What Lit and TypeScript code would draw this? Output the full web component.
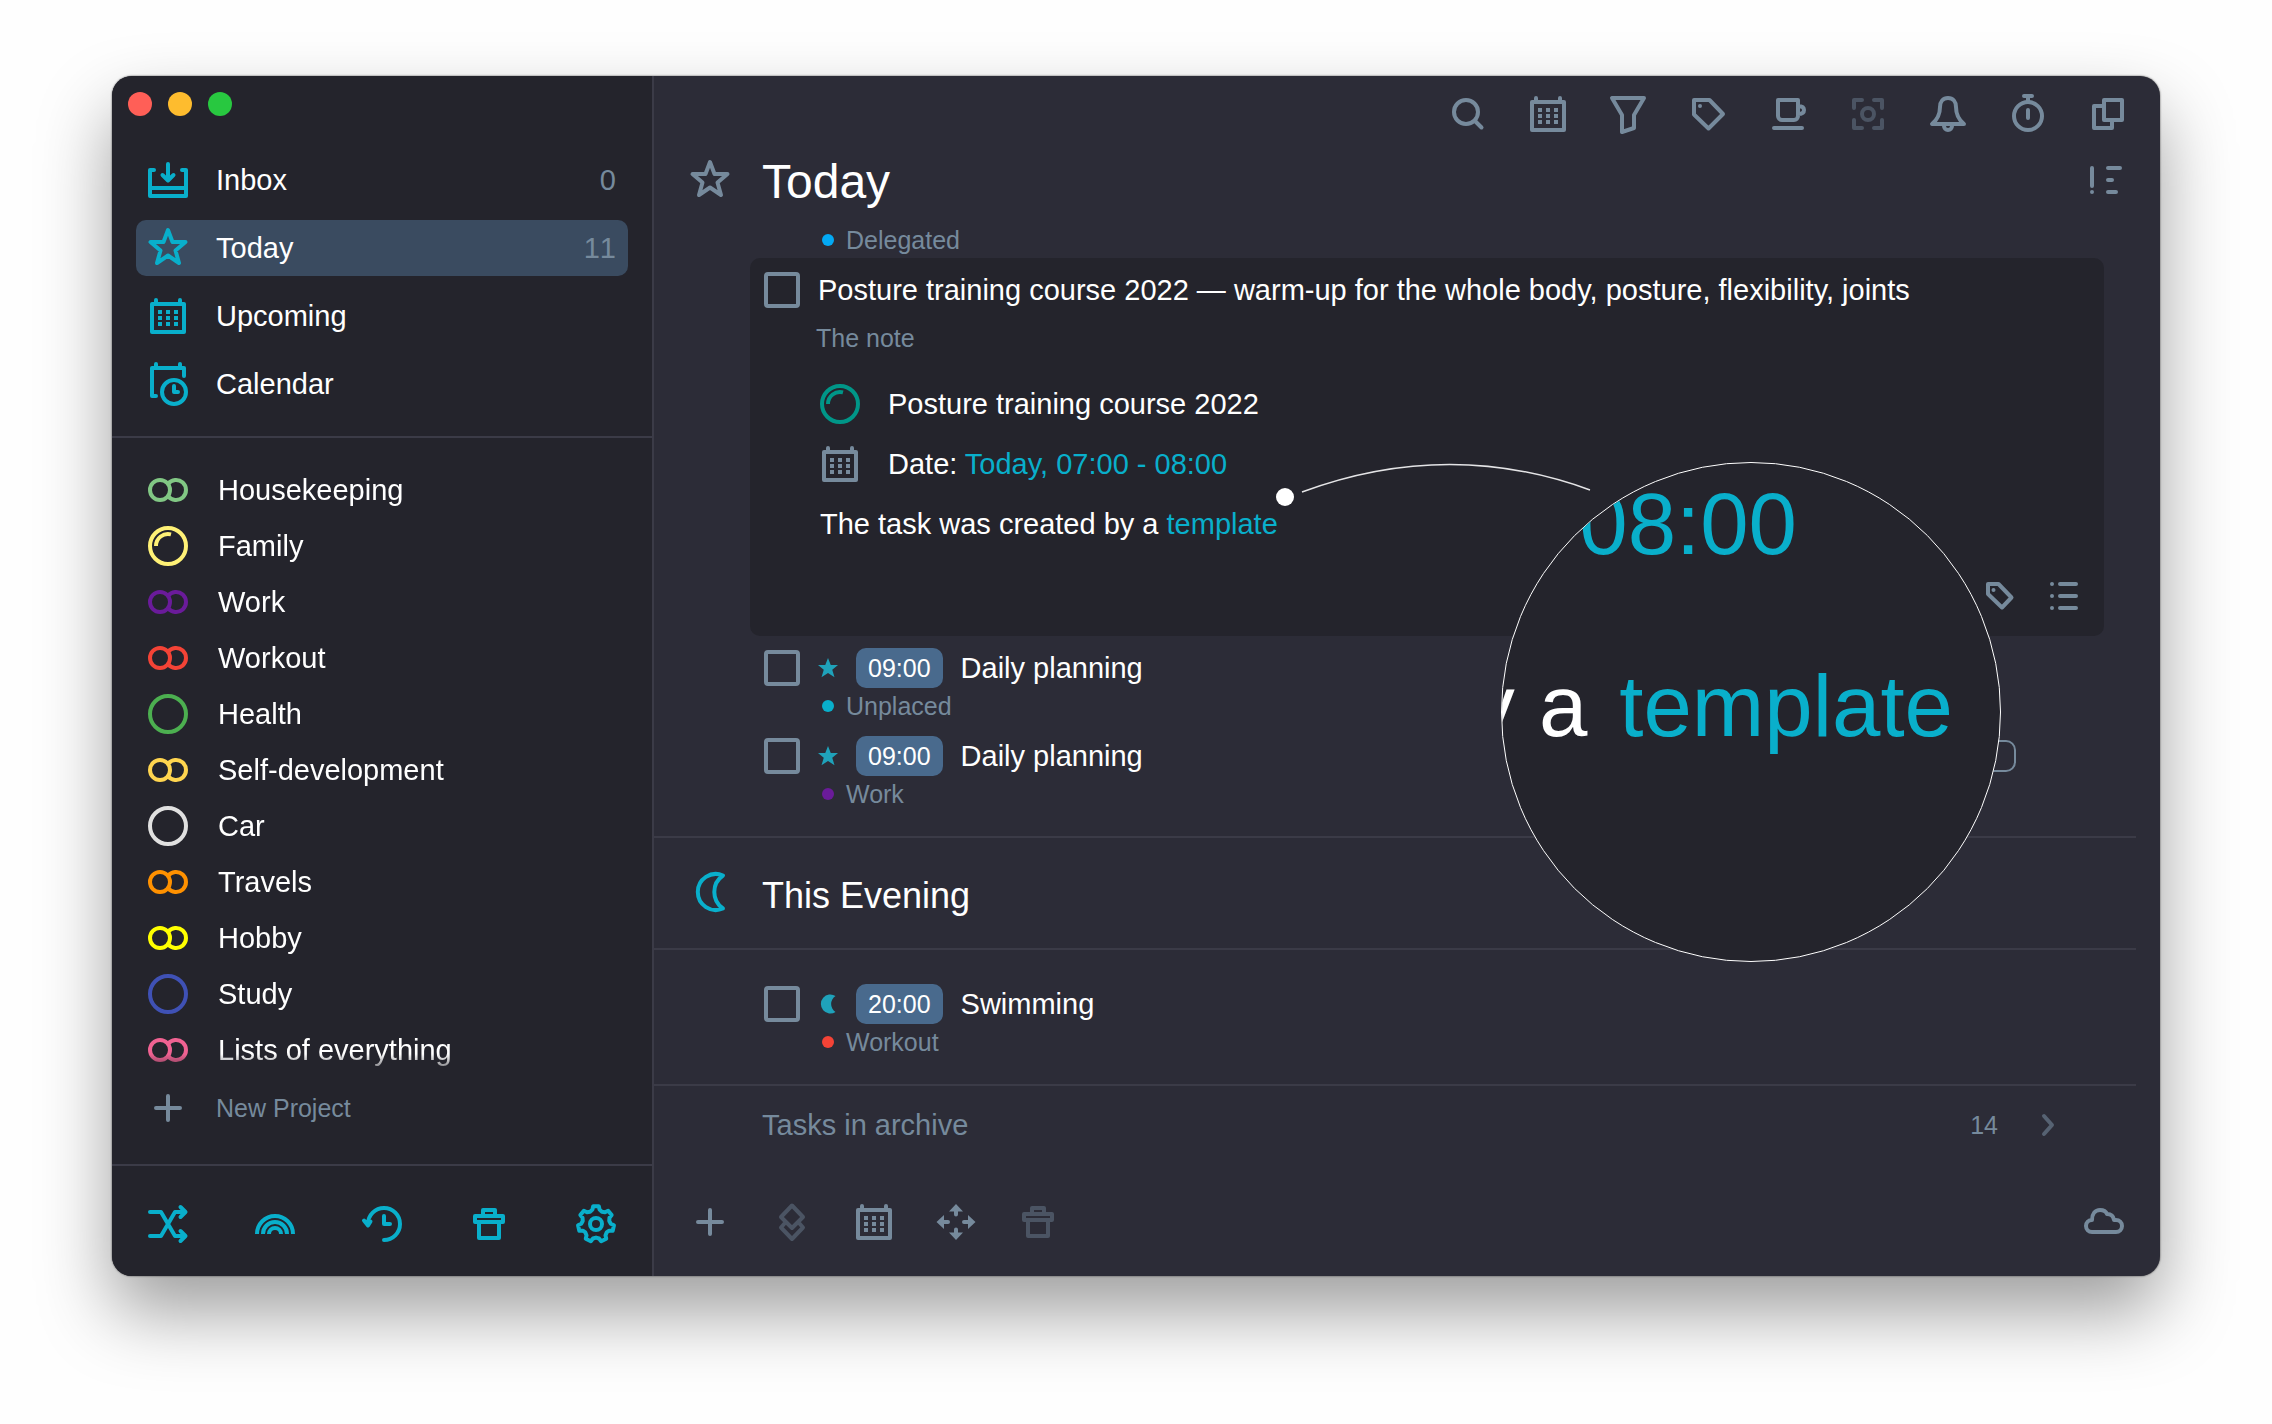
import { LitElement, html, svg, css, nothing, type SVGTemplateResult } from "lit";
import { customElement, property, state } from "lit/decorators.js";
import { classMap } from "lit/directives/class-map.js";
import { styleMap } from "lit/directives/style-map.js";

/** Outline of a cog with rounded teeth, centred in a 40 unit box. */
function cogPath(teeth: number): string {
  const step = 360 / teeth;
  const points: string[] = [];
  const at = (deg: number, r: number) => {
    const a = ((deg - 90) * Math.PI) / 180;
    return `${(20 + r * Math.cos(a)).toFixed(2)} ${(20 + r * Math.sin(a)).toFixed(2)}`;
  };
  for (let i = 0; i < teeth; i++) {
    const c = i * step;
    points.push(at(c - 9, 18), at(c + 9, 18), at(c + 14, 14.8), at(c + step / 2, 13.6), at(c + step - 14, 14.8));
  }
  return `M${points.join("L")}Z`;
}

const ICONS: Record<string, SVGTemplateResult> = {
  inbox: svg`<path d="M6 10H2V36H38V10H34M2 28H38M20 4V20M14.5 15L20 20.5L25.5 15"/>`,
  star: svg`<path d="M20 2L24.5 14H37.5L27.5 22.5L31 35L20 27.5L9 35L12.500 22.500L2.500 14H15.500Z"/>`,
  calendar: svg`<path d="M4 8H36V36H4ZM8 4V8M32 4V8"/>
    <path class="solid" d="M10 14h4v4h-4zM18 14h4v4h-4zM26 14h4v4h-4zM10 20h4v4h-4zM18 20h4v4h-4zM26 20h4v4h-4zM10 26h4v4h-4zM18 26h4v4h-4zM26 26h4v4h-4z"/>`,
  schedule: svg`<path d="M8 32H4V4H36V12M8 0V4M32 0V4"/><circle cx="26" cy="28" r="12"/><path d="M26 22V28H30"/>`,
  group: svg`<circle cx="12" cy="20" r="10"/><path class="butt" d="M20 14A10 10 0 1 1 20 26"/>`,
  ring: svg`<circle cx="20" cy="20" r="18"/>`,
  progress: svg`<circle cx="20" cy="20" r="18"/><path class="butt" d="M8 20A12 12 0 0 1 23 8.400"/>`,
  plus: svg`<path d="M8 20H32M20 8V32"/>`,
  shuffle: svg`<path d="M2 8H13L27 32H36M2 32H13L27 8H36M32.500 3L37.500 8L32.500 13M32.500 27L37.500 32L32.500 37"/>`,
  rainbow: svg`<path class="butt" d="M2 30A18 18 0 0 1 38 30M8 30A12 12 0 0 1 32 30M14 30A6 6 0 0 1 26 30"/>`,
  history: svg`<path d="M22 36A16 16 0 1 0 6 20M2 16.500L6 21.500L8.500 17.500M22 12V20H28"/>`,
  trash: svg`<path d="M6 12H34V18H6ZM14 12V6H26V12M10 18V34H30V18"/>`,
  cog: svg`<path d=${cogPath(7)}/><circle cx="20" cy="20" r="6"/>`,
  search: svg`<circle cx="18" cy="18" r="12"/><path d="M27 27L33.500 33.500"/>`,
  filter: svg`<path d="M4 4H36L26 21V34L14 38V21Z"/>`,
  tag: svg`<path d="M6 6H21.500L35 20L20.500 34.500L6 20.500Z"/><circle class="solid" cx="12" cy="12" r="2"/>`,
  smallTag: svg`<path d="M8 8H18.500L31.500 21.500L22 31.500L8 18Z"/><circle class="solid" cx="13.500" cy="14" r="2"/>`,
  cup: svg`<path d="M10 6H30V22A4 4 0 0 1 26 26H14A4 4 0 0 1 10 22ZM30 12C34 12 36 13 36 16S34 20 30 20M6 34H34"/>`,
  focus: svg`<path d="M6 14V6H14M26 6H34V14M34 26V34H26M14 34H6V26"/><circle cx="20" cy="20" r="6"/>`,
  bell: svg`<path d="M20 4C15 4 12 8 12 13C12 21 9 26 4 30H36C31 26 28 21 28 13C28 8 25 4 20 4ZM16 32A4 4 0 0 0 24 32"/>`,
  stopwatch: svg`<circle cx="20" cy="22" r="14"/><path d="M16 2H24M20 2V8M20 16V24"/>`,
  windows: svg`<path d="M16 6H34V26H16ZM16 12H6V34H24V27"/>`,
  priority: svg`<path d="M4 8V26M4 32V32M20 8H32M20 20H24M20 32H28"/>`,
  list: svg`<path d="M8 8V8M8 20V20M8 32V32M16 8H32M16 20H32M16 32H32"/>`,
  layers: svg`<path d="M20 3.500L31 15L20 26L9 15ZM12.500 21.500L9 25.500L20 37L31 25.500L27.500 21.500"/>`,
  move: svg`<path class="solid" d="M20 2L27 9.500H22V12.500A2 2 0 0 1 18 12.500V9.500H13ZM20 38L27 30.500H22V27.500A2 2 0 0 0 18 27.500V30.500H13ZM0.500 20L8 13V18H12A2 2 0 0 1 12 22H8V27ZM39.500 20L32 13V18H28A2 2 0 0 0 28 22H32V27Z"/>`,
  cloud: svg`<path d="M8 30A6 6 0 0 1 8 18C8 12 11 8 16 8C20 8 22 9.500 23 12C27 12 29.500 14.500 30 18H32A6 6 0 0 1 32 30Z"/>`,
  chevron: svg`<path d="M16 11L24 20L16 29"/>`,
  moon: svg`<path d="M33 3.500A18 18 0 1 0 33 36.500A20 20 0 0 1 33 3.500Z"/>`,
  starSolid: svg`<path class="solid" d="M20 0L25.500 14H40L28.500 23.500L33 38.500L20 30L7 38.500L11.500 23.500L0 14H14.500Z"/>`,
  moonSolid: svg`<path class="solid" d="M35 4A19 19 0 1 0 35 36A19 19 0 0 1 35 4Z"/>`,
};

@customElement("line-icon")
export class LineIcon extends LitElement {
  @property() name = "";

  static styles = css`
    :host {
      display: block;
      flex: none;
      width: 40px;
      height: 40px;
    }
    svg {
      display: block;
      width: 100%;
      height: 100%;
      overflow: visible;
      fill: none;
      stroke: currentColor;
      stroke-width: 4;
      stroke-linecap: round;
      stroke-linejoin: round;
    }
    .solid {
      fill: currentColor;
      stroke: none;
    }
    .butt {
      stroke-linecap: butt;
    }
  `;

  render() {
    return html`<svg viewBox="0 0 40 40" aria-hidden="true">${ICONS[this.name] ?? nothing}</svg>`;
  }
}

interface Project {
  name: string;
  icon: "group" | "ring" | "progress";
  color: string;
}

interface Task {
  title: string;
  time: string;
  mark: "starSolid" | "moonSolid";
  project: string;
  color: string;
  tagged?: boolean;
}

const LISTS = [
  { name: "Inbox", icon: "inbox", count: "0" },
  { name: "Today", icon: "star", count: "11" },
  { name: "Upcoming", icon: "calendar", count: "" },
  { name: "Calendar", icon: "schedule", count: "" },
];

const PROJECTS: Project[] = [
  { name: "Housekeeping", icon: "group", color: "#81c784" },
  { name: "Family", icon: "progress", color: "#fff176" },
  { name: "Work", icon: "group", color: "#6a1b9a" },
  { name: "Workout", icon: "group", color: "#f44336" },
  { name: "Health", icon: "ring", color: "#4caf50" },
  { name: "Self-development", icon: "group", color: "#ffd54f" },
  { name: "Car", icon: "ring", color: "#e0e0e0" },
  { name: "Travels", icon: "group", color: "#ff9100" },
  { name: "Hobby", icon: "group", color: "#ffff00" },
  { name: "Study", icon: "ring", color: "#3f51b5" },
  { name: "Lists of everything", icon: "group", color: "#f06292" },
];

const DAY_TASKS: Task[] = [
  { title: "Daily planning", time: "09:00", mark: "starSolid", project: "Unplaced", color: "#09afcb" },
  { title: "Daily planning", time: "09:00", mark: "starSolid", project: "Work", color: "#6a1b9a", tagged: true },
];

const EVENING_TASKS: Task[] = [
  { title: "Swimming", time: "20:00", mark: "moonSolid", project: "Workout", color: "#f44336" },
];

const SIDE_TOOLS = [
  ["shuffle", "Shuffle"],
  ["rainbow", "Areas"],
  ["history", "History"],
  ["trash", "Trash"],
  ["cog", "Settings"],
];

const TOP_TOOLS = [
  ["search", "Search"],
  ["calendar", "Calendar"],
  ["filter", "Filter"],
  ["tag", "Tags"],
  ["cup", "Break"],
  ["focus", "Focus"],
  ["bell", "Reminders"],
  ["stopwatch", "Timer"],
  ["windows", "New window"],
];

const BOTTOM_TOOLS = [
  ["plus", "Add task"],
  ["layers", "Duplicate"],
  ["calendar", "Schedule"],
  ["move", "Move"],
  ["trash", "Delete"],
];

const DISABLED = new Set(["Focus", "Duplicate", "Delete"]);

@customElement("app-root")
export class AppRoot extends LitElement {
  @state() private selected = "Today";

  static styles = css`
    :host {
      --side: #24242c;
      --main: #2c2c37;
      --line: #3b3b47;
      --slate: #768a9c;
      --dim: #4b5463;
      --cyan: #09afcb;
      display: block;
      font-family: "Liberation Sans", Arial, sans-serif;
      font-size: 29px;
      line-height: 40px;
      color: #fff;
    }
    * {
      box-sizing: border-box;
    }
    h1,
    h2,
    p,
    ul {
      margin: 0;
      padding: 0;
      font-weight: 400;
    }
    ul {
      list-style: none;
    }
    button {
      display: block;
      margin: 0;
      padding: 0;
      border: 0;
      background: none;
      color: inherit;
      font: inherit;
      text-align: left;
      cursor: pointer;
    }
    button:disabled {
      color: var(--dim);
      cursor: default;
    }
    a {
      color: var(--cyan);
      text-decoration: none;
    }
    .page {
      display: grid;
      min-height: 100vh;
      padding: 76px 112px 148px;
      background: #fefefe;
    }
    .window {
      display: grid;
      grid-template-columns: 542px minmax(0, 1fr);
      border-radius: 20px;
      background: var(--main);
      box-shadow: 0 0 2px rgba(0, 0, 0, 0.7), 0 36px 72px rgba(0, 0, 0, 0.38);
    }

    .sidebar {
      display: flex;
      flex-direction: column;
      border-right: 2px solid var(--line);
      border-radius: 20px 0 0 20px;
      background: var(--side);
    }
    .lights {
      display: flex;
      align-items: center;
      gap: 16px;
      height: 56px;
      padding-left: 16px;
    }
    .light {
      width: 24px;
      height: 24px;
      border-radius: 50%;
    }
    .close {
      background: #ff5f57;
    }
    .minimize {
      background: #febc2e;
    }
    .zoom {
      background: #28c840;
    }
    .lists {
      display: grid;
      gap: 12px;
      padding: 20px 24px 24px;
      border-bottom: 2px solid var(--line);
    }
    .entry {
      display: flex;
      align-items: center;
      gap: 28px;
      width: 100%;
      height: 56px;
      padding: 0 12px;
      border-radius: 10px;
    }
    .entry line-icon {
      color: var(--cyan);
    }
    .entry.current {
      background: #3a4b60;
    }
    .count {
      margin-left: auto;
      color: var(--slate);
      font-kerning: none;
    }
    .projects {
      padding: 24px 24px 0;
      -webkit-mask-image: linear-gradient(to top, transparent, #000 24px);
      mask-image: linear-gradient(to top, transparent, #000 24px);
    }
    .project {
      gap: 30px;
    }
    .new {
      display: flex;
      align-items: center;
      gap: 28px;
      height: 60px;
      margin: 0 36px 26px;
      color: var(--slate);
      font-size: 25px;
    }
    .side-tools {
      display: flex;
      justify-content: space-between;
      margin-top: auto;
      padding: 38px 36px 32px;
      border-top: 2px solid var(--line);
      color: var(--cyan);
    }

    .main {
      display: flex;
      flex-direction: column;
      min-width: 0;
    }
    .top-tools {
      display: flex;
      justify-content: flex-end;
      gap: 40px;
      padding: 18px 32px 0;
      color: var(--slate);
    }
    .heading {
      display: flex;
      align-items: flex-start;
      gap: 32px;
      padding: 26px 32px 18px 36px;
      color: var(--slate);
    }
    .heading h1 {
      flex: 1;
      font-size: 48px;
      line-height: 44px;
      color: #fff;
    }
    .section {
      margin-right: 24px;
      border-bottom: 2px solid var(--line);
    }
    .day {
      padding-bottom: 24px;
    }
    .evening-tasks {
      padding: 22px 0 24px;
    }
    .evening {
      display: flex;
      align-items: flex-start;
      gap: 32px;
      height: 112px;
      padding: 34px 0 0 36px;
    }
    .evening line-icon {
      color: var(--cyan);
    }
    .evening h2 {
      font-size: 36px;
      line-height: 48px;
    }

    .task {
      padding: 12px 120px 0 110px;
    }
    .task-line {
      display: flex;
      align-items: center;
      gap: 18px;
      height: 40px;
    }
    .task-line line-icon {
      width: 20px;
      height: 20px;
      color: #1fa2ba;
    }
    .check {
      flex: none;
      width: 36px;
      height: 36px;
      margin: 0;
      border: 4px solid var(--slate);
      border-radius: 4px;
      appearance: none;
    }
    .check:checked {
      background: var(--slate);
    }
    .time {
      padding: 0 12px;
      border-radius: 10px;
      background: #496a8d;
      font-size: 25px;
    }
    .label {
      width: 60px;
      height: 32px;
      margin-left: auto;
      border: 2px solid var(--slate);
      border-radius: 10px;
    }
    .origin {
      display: flex;
      align-items: center;
      gap: 12px;
      height: 36px;
      padding-left: 58px;
      color: var(--slate);
      font-size: 25px;
    }
    .first {
      margin-left: 110px;
    }
    .dot {
      width: 12px;
      height: 12px;
      border-radius: 50%;
    }

    .card {
      position: relative;
      z-index: 1;
      margin: 0 32px 0 96px;
      padding: 14px 20px 20px 14px;
      border-radius: 10px;
      background: var(--side);
    }
    .card-line {
      display: flex;
      align-items: center;
      gap: 18px;
      height: 36px;
    }
    .card-body {
      padding: 14px 0 0 52px;
    }
    .note {
      padding-bottom: 20px;
      color: var(--slate);
      font-size: 25px;
      line-height: 32px;
    }
    .detail {
      display: flex;
      align-items: center;
      gap: 28px;
      height: 60px;
      padding-left: 4px;
    }
    .teal {
      color: #009688;
    }
    .slate {
      color: var(--slate);
    }
    .card-tools {
      display: flex;
      justify-content: flex-end;
      gap: 24px;
      padding-top: 22px;
      color: var(--slate);
    }
    .pointer {
      position: absolute;
      top: 200px;
      left: 520px;
      width: 324px;
      height: 52px;
      overflow: visible;
      fill: none;
      stroke: #e4e4e6;
      stroke-width: 1.5;
    }
    .pointer circle {
      fill: #fff;
      stroke: none;
    }
    .lens {
      position: absolute;
      top: 204px;
      right: 103px;
      display: flex;
      flex-direction: column;
      align-items: flex-end;
      width: 500px;
      height: 500px;
      overflow: hidden;
      border: 1px solid #fff;
      border-radius: 50%;
      background: var(--side);
      font-size: 87px;
      line-height: 182px;
      white-space: nowrap;
    }
    .lens-date {
      margin: -30px 203px 0 0;
    }
    .lens-origin {
      display: flex;
      gap: 32px;
      margin-right: 47px;
    }
    .lens em {
      color: var(--cyan);
      font-style: normal;
    }

    .archive {
      display: flex;
      align-items: center;
      height: 78px;
      padding: 0 92px 0 108px;
      color: var(--slate);
    }
    .archive-count {
      margin: 0 30px 0 auto;
      font-size: 25px;
    }
    .archive line-icon {
      color: #566272;
    }
    .bottom-tools {
      display: flex;
      gap: 42px;
      margin-top: auto;
      padding: 36px 36px 34px;
      color: var(--slate);
    }
    .sync {
      margin-left: auto;
    }
  `;

  private tools(items: string[][]) {
    return items.map(
      ([icon, label]) => html`<button aria-label=${label} ?disabled=${DISABLED.has(label)}>
        <line-icon name=${icon}></line-icon>
      </button>`,
    );
  }

  private origin(name: string, color: string, first = false) {
    return html`<div class=${classMap({ origin: true, first })}>
      <span class="dot" style=${styleMap({ background: color })}></span>${name}
    </div>`;
  }

  private task(task: Task, id: string) {
    return html`<li class="task">
      <div class="task-line">
        <input class="check" type="checkbox" id=${id} />
        <line-icon name=${task.mark}></line-icon>
        <span class="time">${task.time}</span>
        <label for=${id}>${task.title}</label>
        ${task.tagged ? html`<span class="label"></span>` : nothing}
      </div>
      ${this.origin(task.project, task.color)}
    </li>`;
  }

  private sidebar() {
    return html`<aside class="sidebar">
      <div class="lights">
        <button class="light close" aria-label="Close"></button>
        <button class="light minimize" aria-label="Minimize"></button>
        <button class="light zoom" aria-label="Zoom"></button>
      </div>
      <nav class="lists" aria-label="Lists">
        ${LISTS.map(
          (l) => html`<button
            class=${classMap({ entry: true, current: l.name === this.selected })}
            @click=${() => (this.selected = l.name)}
          >
            <line-icon name=${l.icon}></line-icon><span>${l.name}</span><span class="count">${l.count}</span>
          </button>`,
        )}
      </nav>
      <nav class="projects" aria-label="Projects">
        ${PROJECTS.map(
          (p) => html`<button class="entry project">
            <line-icon name=${p.icon} style=${styleMap({ color: p.color })}></line-icon><span>${p.name}</span>
          </button>`,
        )}
      </nav>
      <button class="new"><line-icon name="plus"></line-icon>New Project</button>
      <div class="side-tools">${this.tools(SIDE_TOOLS)}</div>
    </aside>`;
  }

  private openTask() {
    return html`<article class="card">
      <div class="card-line">
        <input class="check" type="checkbox" id="open-task" />
        <label for="open-task">Posture training course 2022 — warm-up for the whole body, posture, flexibility, joints</label>
      </div>
      <div class="card-body">
        <p class="note">The note</p>
        <div class="detail">
          <line-icon class="teal" name="progress"></line-icon><span>Posture training course 2022</span>
        </div>
        <div class="detail">
          <line-icon class="slate" name="calendar"></line-icon>
          <span>Date: <a href="#date">Today, 07:00 - 08:00</a></span>
        </div>
        <div class="detail"><span>The task was created by a <a href="#template">template</a></span></div>
      </div>
      <div class="card-tools">
        <button aria-label="Tags"><line-icon name="smallTag"></line-icon></button>
        <button aria-label="Checklist"><line-icon name="list"></line-icon></button>
      </div>
      <svg class="pointer" viewBox="0 0 324 52" aria-hidden="true">
        <circle cx="15" cy="39" r="9" />
        <path d="M32 34Q178 -20 320 32" />
      </svg>
      <div class="lens" aria-hidden="true">
        <span class="lens-date"><em>08:00</em></span>
        <span class="lens-origin"><span>y a</span><em>template</em></span>
      </div>
    </article>`;
  }

  render() {
    return html`<div class="page">
      <div class="window">
        ${this.sidebar()}
        <main class="main">
          <div class="top-tools">${this.tools(TOP_TOOLS)}</div>
          <header class="heading">
            <line-icon name="star"></line-icon>
            <h1>Today</h1>
            <button aria-label="Sort by priority"><line-icon name="priority"></line-icon></button>
          </header>
          <section class="section day">
            ${this.origin("Delegated", "#03a9f4", true)} ${this.openTask()}
            <ul>
              ${DAY_TASKS.map((t, i) => this.task(t, `day-${i}`))}
            </ul>
          </section>
          <div class="section evening">
            <line-icon name="moon"></line-icon>
            <h2>This Evening</h2>
          </div>
          <ul class="section evening-tasks">
            ${EVENING_TASKS.map((t, i) => this.task(t, `evening-${i}`))}
          </ul>
          <button class="archive">
            <span>Tasks in archive</span><span class="archive-count">14</span>
            <line-icon name="chevron"></line-icon>
          </button>
          <footer class="bottom-tools">
            ${this.tools(BOTTOM_TOOLS)}
            <button class="sync" aria-label="Sync"><line-icon name="cloud"></line-icon></button>
          </footer>
        </main>
      </div>
    </div>`;
  }
}
